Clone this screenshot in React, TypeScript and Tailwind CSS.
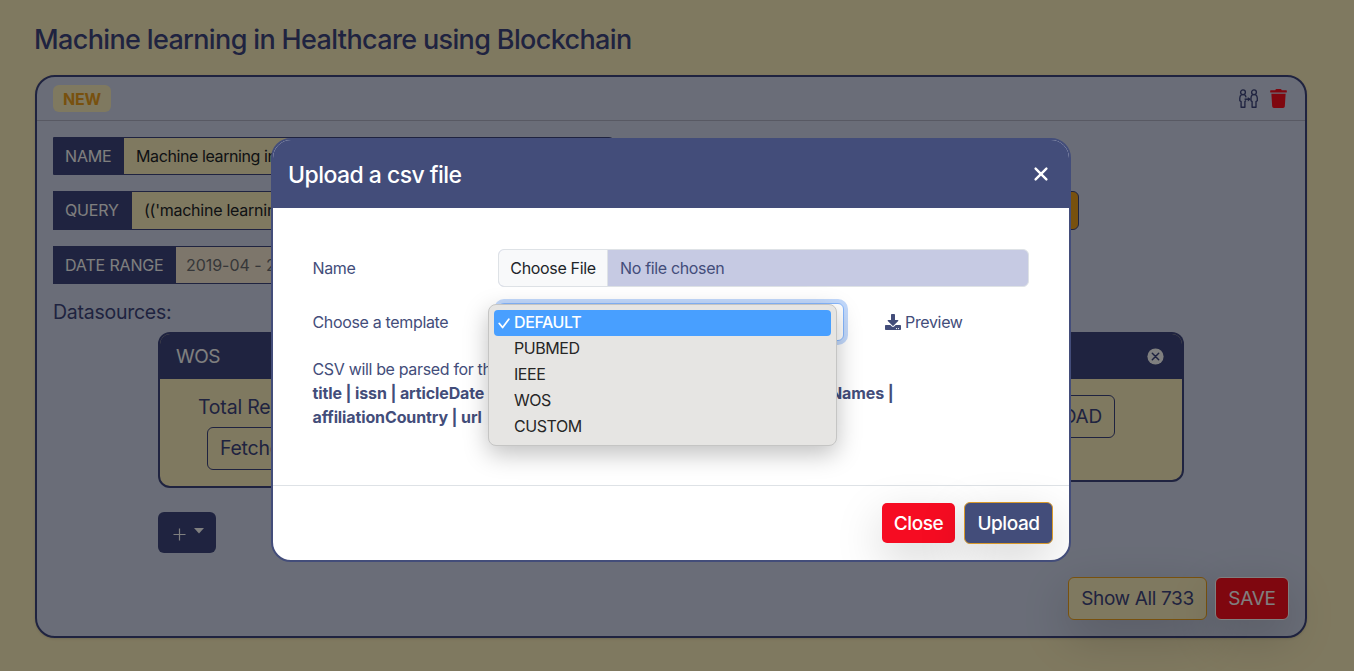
import { FaTrash, FaDownload } from "react-icons/fa";
import type { ReactNode } from "react";

function PeopleArrow() {
  return (
    <svg width="19" height="19" viewBox="0 0 19 19" fill="none" stroke="currentColor" strokeWidth="1.35" strokeLinejoin="round">
      <circle cx="4" cy="3.3" r="2.4" />
      <circle cx="15" cy="3.3" r="2.4" />
      <path d="M2.5 5.6Q.8 6.8.8 9v2.8l1.3.8v5.6h3.8v-5.6l1-1M5.5 5.6Q6.9 6.6 7 8.4" />
      <path d="M13.5 5.6q-1.5 1.2-1.5 3.4v2.8l1.1.8v5.6h3.9v-5.6l1.3-.8V9q0-2.2-1.8-3.4" />
      <path d="M5.6 10.2h5.6" strokeWidth="1.5" />
      <path d="M8.8 8l2.8 2.2-2.8 2.2z" fill="currentColor" stroke="none" />
    </svg>
  );
}

function CircleX() {
  return (
    <svg width="17" height="17" viewBox="0 0 17 17">
      <circle cx="8.5" cy="8.5" r="8.1" fill="#fff" />
      <path d="M5.3 5.3l6.4 6.4M11.7 5.3l-6.4 6.4" stroke="#3f4780" strokeWidth="1.5" strokeLinecap="round" />
    </svg>
  );
}

function Field({ label, labelClass, inputClass, size, children }: { label: string; labelClass: string; inputClass: string; size: string; children: ReactNode }) {
  return (
    <div className={`mt-4 flex border border-[#3f4780] ${size}`}>
      <span className={`flex shrink-0 items-center bg-[#3f4780] pl-[11px] text-base tracking-[-0.15px] text-white ${labelClass}`}>{label}</span>
      <span className={`flex flex-1 items-center overflow-hidden whitespace-nowrap ${inputClass}`}>{children}</span>
    </div>
  );
}

function Page() {
  return (
    <div className="h-[671px] px-[35px] pt-[22px] text-[#3f4780]">
      <h1 className="h-[53px] text-[27px] leading-[36px] font-medium tracking-[-0.64px] whitespace-nowrap">
        <span className="-ml-px">Machine learning in Healthcare using Blockchain</span>
      </h1>
      <section className="flex h-[563px] w-[1272px] flex-col rounded-[20px] border-2 border-[#3f4780] bg-[#d4dbf0] shadow-sm">
        <header className="flex h-[44px] shrink-0 items-center justify-between border-b border-[#b0b2c6] pr-[17px] pl-4">
          <span className="flex h-[27px] w-[58px] items-center justify-center rounded-md bg-[#fff2c0] text-base font-bold tracking-[-0.2px] text-[#f0a31d]">NEW</span>
          <div className="flex items-center gap-[11px]">
            <PeopleArrow />
            <FaTrash size={19} color="#ff0f1f" />
          </div>
        </header>
        <div className="flex flex-1 flex-col px-4">
          <Field label="NAME" labelClass="w-[70px]" inputClass="bg-[#fff2c0] pl-3 tracking-[-0.4px] text-[#212529]" size="w-[562px] h-[38px] rounded-r-md">Machine learning in Healthcare using Blockchain</Field>
          <div className="flex">
            <Field label="QUERY" labelClass="w-[78px] pb-px" inputClass="bg-[#fff2c0] pb-px pl-3 tracking-[-0.25px] text-[#212529]" size="w-[986px] h-[39px]">(('machine learning') AND healthcare AND blockchain)</Field>
            <span className="mt-4 h-[39px] w-[40px] rounded-r-md border border-[#3f4780] bg-[#f0a31d]" />
          </div>
          <Field label="DATE RANGE" labelClass="w-[122px]" inputClass="bg-[#fbedd6] pl-[10px] tracking-[-0.05px] text-[#6d6f73]" size="w-[562px] h-[38px]">2019-04 - 2022-04</Field>
          <h2 className="mt-[13px] h-[35px] text-[19.5px] leading-[30px] tracking-[-0.25px]">Datasources:</h2>
          <div className="flex h-[156px] w-[1026px] self-center">
            <div className="flex h-[156px] w-[500px] flex-col overflow-hidden rounded-[12px] border-2 border-[#3f4780] bg-[#fff2c0]">
              <div className="flex h-[45px] items-center bg-[#3f4780] pl-4 pt-px text-[19px] tracking-[-0.5px] text-white">WOS</div>
              <div className="mt-[14px] pl-[38px] text-[19.5px] leading-[28px] tracking-[-0.2px]">Total Results: 733</div>
              <div className="mt-[6px] ml-[47px] flex h-[43px] w-[140px] items-center rounded-md border border-[#3f4780] pl-3 text-[19.5px] tracking-[-0.25px]">Fetched 733</div>
            </div>
            <div className="-ml-3 flex h-[150px] w-[538px] flex-col overflow-hidden rounded-r-[12px] border-2 border-l-0 border-[#3f4780] bg-[#fff2c0]">
              <div className="flex h-[45px] items-center justify-end bg-[#3f4780] pr-[18px]"><CircleX /></div>
              <div className="mt-4 mr-[67px] flex h-[43px] w-[110px] items-center justify-end self-end rounded-md border border-[#3f4780] pt-px pr-3 text-[19px] tracking-[-0.2px]">UPLOAD</div>
            </div>
          </div>
          <div className="mt-6 ml-[105px] flex h-[41px] w-[58px] items-center justify-center gap-2 rounded-md bg-[#3f4780] pl-[3px] text-white">
            <svg width="13" height="13" viewBox="0 0 13 13" className="mt-1" fill="none" stroke="currentColor" strokeWidth="1.2"><path d="M6.5 .5v12M.5 6.5h12" /></svg>
            <svg width="10" height="6" viewBox="0 0 10 6" className="mb-1" fill="currentColor"><path d="M0 0h10L5 5.5z" /></svg>
          </div>
          <div className="mt-6 flex justify-end gap-[8px] text-[19px]">
            <button className="h-[43px] w-[139px] rounded-md border border-[#f0a31d] bg-[#fff2c0] pt-[2px] tracking-[-0.36px] whitespace-nowrap shadow-[0_16px_48px_rgba(0,0,0,.175)]">Show All 733</button>
            <button className="h-[43px] w-[74px] rounded-md border border-white bg-[#ff0f1f] pt-px tracking-[-0.3px] text-white shadow-[0_16px_48px_rgba(0,0,0,.175)]">SAVE</button>
          </div>
        </div>
      </section>
    </div>
  );
}

function TemplateMenu() {
  return (
    <div className="absolute top-0 left-[-11px] h-[142px] w-[349px] rounded-lg border border-[#c5c5c4] bg-[#e6e5e3] p-[5px] text-[16px] tracking-[-0.45px] text-[#262626] shadow-[0_8px_24px_rgba(0,0,0,.25)]">
      <div className="flex h-[26px] items-center rounded bg-[#489fff] pl-1 font-medium text-white">
        <svg width="16" height="16" viewBox="0 0 16 16" fill="none" stroke="currentColor" strokeWidth="1.8" strokeLinecap="round" strokeLinejoin="round"><path d="M1.3 8.5l3.3 4L10.8 4.3" /></svg>
        <span className="pb-[2px] tracking-[-0.4px]">DEFAULT</span>
      </div>
      {["PUBMED", "IEEE", "WOS", "CUSTOM"].map((item) => (
        <div key={item} className="h-[26px] pl-5 leading-[24px]">{item}</div>
      ))}
    </div>
  );
}

function UploadDialog() {
  return (
    <div className="flex h-[424px] w-[800px] flex-col overflow-hidden rounded-[20px] border-2 border-[#434d7a] bg-white text-base text-[#434d7a]">
      <header className="flex h-[68px] shrink-0 items-center justify-between bg-[#434d7a] pr-[20px] pl-4 text-white">
        <h2 className="-ml-px pt-[2px] text-[23px] font-medium tracking-[-0.54px]">Upload a csv file</h2>
        <svg width="16" height="16" viewBox="0 0 16 16" fill="none" stroke="currentColor" strokeWidth="2.4" strokeLinecap="round"><path d="M2.6 2.6l10.8 10.8M13.4 2.6L2.6 13.4" /></svg>
      </header>
      <div className="flex h-[277px] shrink-0 flex-col pt-[41px] pr-[40px] pl-[39.5px] tracking-[-0.34px]">
        <div className="flex items-center">
          <span className="w-[185.5px]">Name</span>
          <div className="flex h-[38px] w-[531px] overflow-hidden rounded-md border border-[#dee2e6] bg-[#c6cae3]">
            <span className="flex w-[109px] items-center justify-center border-r border-[#dee2e6] bg-[#f8f9fa] text-[#212529]">Choose File</span>
            <span className="flex items-center pl-3">No file chosen</span>
          </div>
        </div>
        <div className="mt-4 flex h-[38px] items-center">
          <span className="w-[185.5px]">Choose a template</span>
          <div className="relative h-[38px] w-[346px] rounded-md border border-[#86b7fe] bg-white shadow-[0_0_0_4px_#c2d9fc]">
            <TemplateMenu />
          </div>
          <span className="ml-[41px] flex items-center gap-1"><FaDownload size={16} />Preview</span>
        </div>
        <div className="mt-4 w-[581px] leading-6 whitespace-nowrap">
          <p>CSV will be parsed for the following columns:</p>
          <p className="flex justify-between font-bold tracking-[-0.12px]">
            <span>title | issn | articleDate | doi | publicationName</span>
            <span>authorNames |</span>
          </p>
          <p className="font-bold tracking-[-0.12px]">affiliationCountry | url</p>
        </div>
      </div>
      <footer className="flex flex-1 items-center justify-end gap-[9px] border-t border-[#dee2e6] pr-4 text-[19px] font-medium tracking-[-0.45px] text-white">
        <button className="h-[40px] w-[73px] rounded-[5px] bg-[#f60c22] pt-[2px] shadow-[0_16px_48px_rgba(0,0,0,.175)]">Close</button>
        <button className="h-[42px] w-[89px] rounded-md border border-[#d99a2b] bg-[#434d7a] pt-[2px] shadow-[0_16px_48px_rgba(0,0,0,.175)]">Upload</button>
      </footer>
    </div>
  );
}

export default function App() {
  return (
    <main className="relative h-[671px] w-[1354px] overflow-hidden bg-[#fff2c0] font-['Inter','Liberation_Sans',sans-serif]">
      <Page />
      <div className="absolute inset-0 flex items-start justify-center bg-black/50 pt-[138px] pr-[12px]">
        <UploadDialog />
      </div>
    </main>
  );
}
